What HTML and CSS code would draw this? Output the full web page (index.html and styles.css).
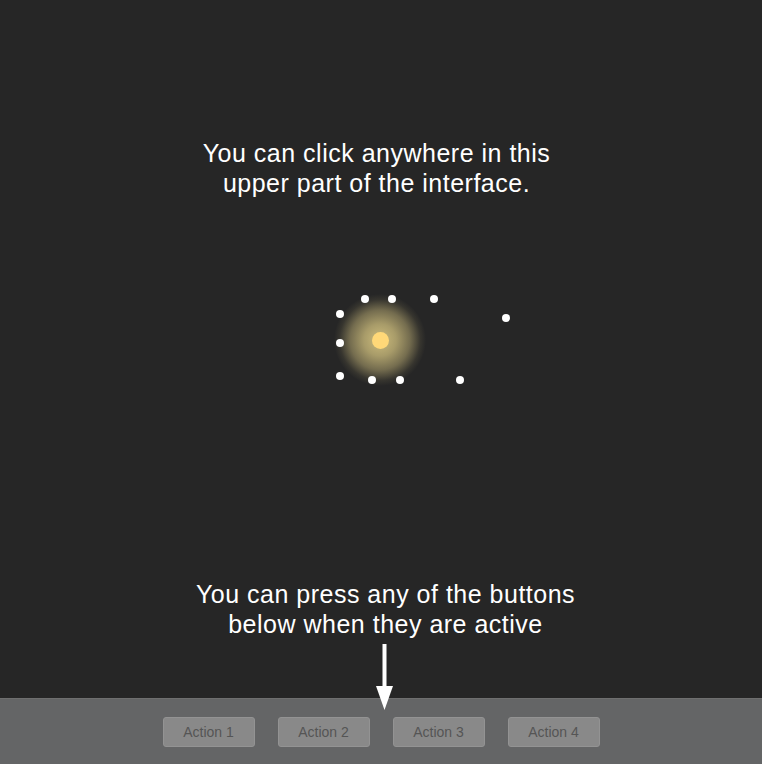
FILE: index.html
```html
<!DOCTYPE html>
<html>
<head>
<meta charset="utf-8">
<link rel="stylesheet" href="styles.css">
</head>
<body>
<div class="app">
  <main class="stage">
    <p class="hint hint-top">You can click anywhere in this<br>upper part of the interface.</p>
    <div class="canvas">
      <div class="glow"></div>
      <div class="core"></div>
      <span class="dot" style="left:365px;top:299px"></span>
      <span class="dot" style="left:392px;top:299px"></span>
      <span class="dot" style="left:434px;top:299px"></span>
      <span class="dot" style="left:340px;top:314px"></span>
      <span class="dot" style="left:506px;top:318px"></span>
      <span class="dot" style="left:340px;top:343px"></span>
      <span class="dot" style="left:340px;top:376px"></span>
      <span class="dot" style="left:372px;top:380px"></span>
      <span class="dot" style="left:400px;top:380px"></span>
      <span class="dot" style="left:460px;top:380px"></span>
    </div>
    <p class="hint hint-bottom">You can press any of the buttons<br>below when they are active</p>
    <svg class="arrow" width="20" height="68" viewBox="0 0 20 68">
      <rect x="7.5" y="0" width="4" height="44" fill="#ffffff"/>
      <polygon points="1,42 18,42 9.5,66" fill="#ffffff"/>
    </svg>
  </main>
  <footer class="bar">
    <button class="action">Action 1</button>
    <button class="action">Action 2</button>
    <button class="action">Action 3</button>
    <button class="action">Action 4</button>
  </footer>
</div>
</body>
</html>
```
FILE: styles.css
```css
html, body {
  margin: 0;
  padding: 0;
  background: #262626;
  font-family: "Liberation Sans", Arial, sans-serif;
}
.app {
  width: 762px;
  height: 764px;
  display: flex;
  flex-direction: column;
  overflow: hidden;
}
.stage {
  position: relative;
  flex: 0 0 698px;
  height: 698px;
  display: flex;
  flex-direction: column;
  align-items: center;
}
.hint {
  margin: 0;
  color: #ffffff;
  font-size: 25px;
  letter-spacing: 0.5px;
  line-height: 30px;
  text-align: center;
  position: relative;
  z-index: 2;
}
.hint-top {
  margin-top: 138px;
  padding-right: 9px;
}
.hint-bottom {
  margin-top: auto;
  margin-bottom: 59px;
  padding-left: 9px;
}
.canvas {
  position: absolute;
  inset: 0;
}
.glow {
  position: absolute;
  left: 334px;
  top: 294px;
  width: 92px;
  height: 92px;
  border-radius: 50%;
  background: radial-gradient(circle closest-side, rgba(222,204,134,0.9) 0%, rgba(204,188,124,0.78) 35%, rgba(180,166,112,0.55) 65%, rgba(120,112,80,0.2) 88%, rgba(38,38,38,0) 100%);
}
.core {
  position: absolute;
  left: 372px;
  top: 332px;
  width: 17px;
  height: 17px;
  border-radius: 50%;
  background: #ffd878;
}
.dot {
  position: absolute;
  width: 8px;
  height: 8px;
  margin: -4px 0 0 -4px;
  border-radius: 50%;
  background: #ffffff;
}
.arrow {
  position: absolute;
  left: 375px;
  top: 644px;
  z-index: 3;
}
.bar {
  flex: 0 0 66px;
  height: 66px;
  box-sizing: border-box;
  border-top: 1px solid #6f6f6f;
  background: #646566;
  display: flex;
  justify-content: center;
  align-items: flex-start;
  gap: 23px;
  padding-top: 18px;
}
.action {
  width: 92px;
  height: 30px;
  margin: 0;
  padding: 0;
  border: 1px solid #939393;
  border-radius: 3px;
  background: #898989;
  color: #555555;
  font-family: "Liberation Sans", Arial, sans-serif;
  font-size: 14px;
}
```
